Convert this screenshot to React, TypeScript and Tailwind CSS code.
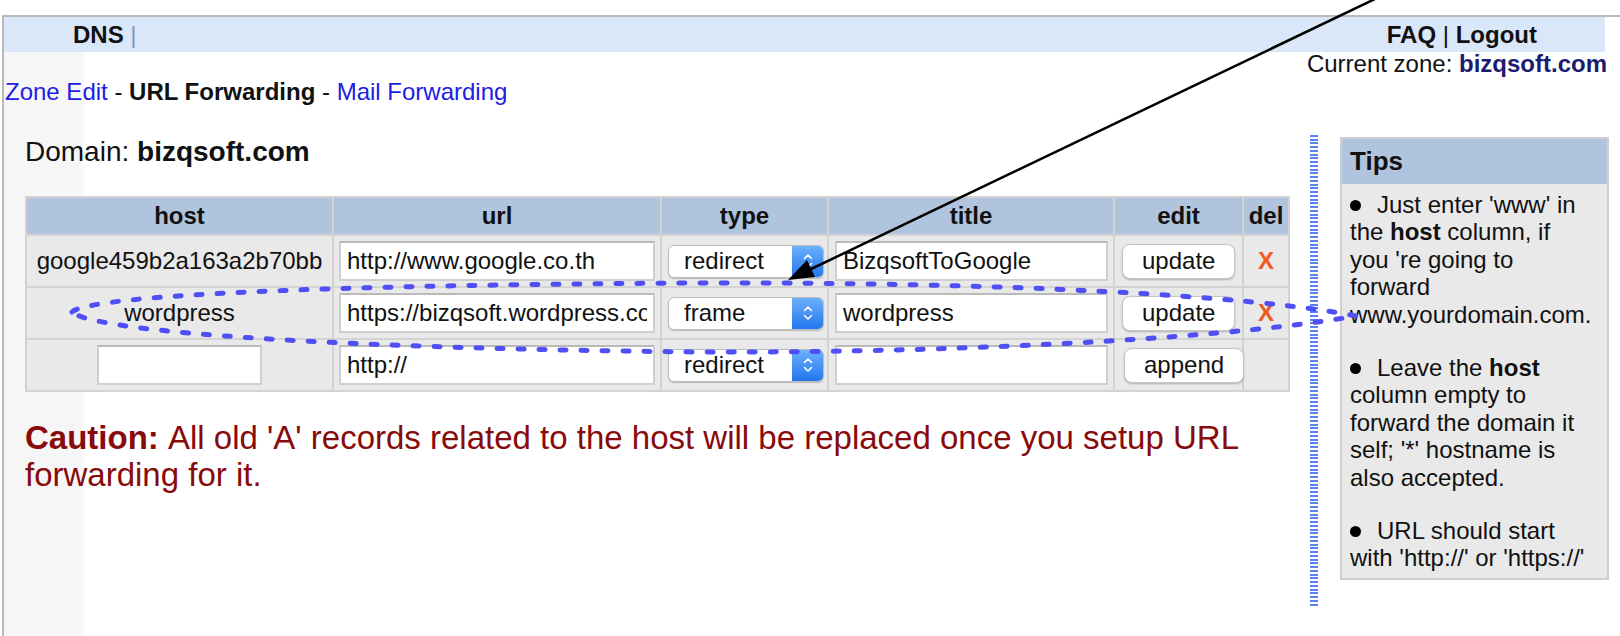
import React from "react";

type Rec = { host: string; url: string; type: string; title: string };

const records: Rec[] = [
  { host: "google459b2a163a2b70bb", url: "http://www.google.co.th", type: "redirect", title: "BizqsoftToGoogle" },
  { host: "wordpress", url: "https://bizqsoft.wordpress.com/", type: "frame", title: "wordpress" },
];

const cell = "border-2 border-[#d3d3d3] bg-[#e9e9e9] px-[5px] align-middle";
const head = "border-2 border-[#d3d3d3] bg-[#b0c4de] font-bold text-center";

function Chevrons() {
  return (
    <svg width="12" height="20" viewBox="0 0 12 20" fill="none" stroke="white" strokeWidth="1.6" strokeLinecap="round" strokeLinejoin="round">
      <path d="M2.5 7.5 L6 4 L9.5 7.5" />
      <path d="M2.5 12.5 L6 16 L9.5 12.5" />
    </svg>
  );
}

function TypeSelect({ value }: { value: string }) {
  return (
    <div className="flex h-[33px] w-[156px] items-stretch rounded-[6px] border border-[#bdbdbd] bg-white shadow-[0_1px_1px_rgba(0,0,0,0.2)]">
      <span className="flex-1 pl-[15px] text-[24px] leading-[30px] text-[#111]">{value}</span>
      <span className="flex w-[31px] items-center justify-center rounded-r-[5px] bg-gradient-to-b from-[#6cb0fa] to-[#1f76ee]">
        <Chevrons />
      </span>
    </div>
  );
}

function Btn({ label }: { label: string }) {
  return (
    <button className="h-[35px] rounded-[8px] border border-[#c6c6c6] bg-white px-[19px] text-[24px] leading-[32px] text-[#111] shadow-[0_1px_2px_rgba(0,0,0,0.25)]">
      {label}
    </button>
  );
}

function TextBox({ value, className = "w-full" }: { value: string; className?: string }) {
  return (
    <input
      readOnly
      value={value}
      className={`${className} block h-[40px] border-2 border-[#cfcfcf] border-t-[#bababa] bg-white px-[6px] text-[24px] text-[#111] outline-none`}
    />
  );
}

function Bullet() {
  return <span className="mr-[16px] inline-block h-[11px] w-[11px] rounded-full bg-black align-[2px]" />;
}

export default function App() {
  return (
    <div className="relative h-[636px] w-[1620px] overflow-hidden bg-white font-['Liberation_Sans',Arial,Helvetica,sans-serif] text-[#111]">
      <div className="ml-[2px] mt-[15px] h-[621px] border-l-2 border-t-2 border-[#b9b9b9] bg-[linear-gradient(to_right,#f6f6f6_0,#f6f6f6_76px,#ffffff_82px)]">
        {/* top menu */}
        <div className="flex h-[35px] w-[1601px] items-center justify-between bg-[#dae7f8] pl-[69px] pr-[68px] text-[24px] leading-[35px]">
          <div>
            <span className="font-bold">DNS</span> <span className="text-[#7d95b6]">|</span>
          </div>
          <div className="font-bold">
            FAQ <span className="font-normal">|</span> Logout
          </div>
        </div>
        <div className="w-[1603px] text-right text-[24px] leading-[24px]">
          Current zone: <span className="font-bold text-[#1b1b72]">bizqsoft.com</span>
        </div>
        <div className="mt-[4px] pl-[1px] text-[24px] leading-[24px]">
          <a className="text-[#2020e2]">Zone Edit</a> - <span className="font-bold">URL Forwarding</span> -{" "}
          <a className="text-[#2020e2]">Mail Forwarding</a>
        </div>

        <div className="mt-[31px] flex items-start">
          <div className="w-[1284px] pl-[21px]">
            <div className="mt-[1px] text-[28px] leading-[32px]">
              Domain: <span className="font-bold">bizqsoft.com</span>
            </div>

            <table className="mt-[28px] w-[1263px] table-fixed border-collapse border-2 border-[#d3d3d3] text-[24px]">
              <colgroup>
                <col className="w-[307px]" />
                <col className="w-[328px]" />
                <col className="w-[167px]" />
                <col className="w-[286px]" />
                <col className="w-[129px]" />
                <col className="w-[46px]" />
              </colgroup>
              <thead>
                <tr className="h-[37px]">
                  <th className={head}>host</th>
                  <th className={head}>url</th>
                  <th className={head}>type</th>
                  <th className={head}>title</th>
                  <th className={head}>edit</th>
                  <th className={head}>del</th>
                </tr>
              </thead>
              <tbody>
                {records.map((r) => (
                  <tr key={r.host} className="h-[52px]">
                    <td className={`${cell} whitespace-nowrap text-center`}>{r.host}</td>
                    <td className={cell}>
                      <TextBox value={r.url} />
                    </td>
                    <td className={`${cell} pl-[6px]`}>
                      <TypeSelect value={r.type} />
                    </td>
                    <td className={`${cell} pl-[6px]`}>
                      <TextBox value={r.title} />
                    </td>
                    <td className={`${cell} pl-[7px]`}>
                      <Btn label="update" />
                    </td>
                    <td className={`${cell} text-center text-[24px] font-bold text-[#f25a22]`}>X</td>
                  </tr>
                ))}
                <tr className="h-[52px]">
                  <td className={cell}>
                    <TextBox value="" className="mx-auto w-[165px]" />
                  </td>
                  <td className={cell}>
                    <TextBox value="http://" />
                  </td>
                  <td className={`${cell} pl-[6px]`}>
                    <TypeSelect value="redirect" />
                  </td>
                  <td className={`${cell} pl-[6px]`}>
                    <TextBox value="" />
                  </td>
                  <td className={`${cell} pl-[9px]`}>
                    <Btn label="append" />
                  </td>
                  <td className={cell}></td>
                </tr>
              </tbody>
            </table>

            <p className="mt-[27px] max-w-[1263px] text-[33px] leading-[37px] text-[#880a0a]">
              <b>Caution: </b>All old 'A' records related to the host will be replaced once you setup URL forwarding for it.
            </p>
          </div>

          {/* dotted separator */}
          <div className="ml-[22px] h-[472px] w-[8px] bg-[repeating-linear-gradient(to_bottom,#5b80f5_0,#5b80f5_2px,transparent_2px,transparent_3.75px)]" />

          <aside className="ml-[22px] mt-[2px] w-[269px] border-2 border-[#cfcfcf] bg-[#e9e9e9]">
            <div className="h-[45px] bg-[#b0c4de] pl-[8px] text-[26px] font-bold leading-[45px]">Tips</div>
            <div className="whitespace-nowrap px-[8px] pb-[6px] pt-[7px] text-[24px] leading-[27.4px]">
              <div>
                <Bullet />
                Just enter 'www' in
              </div>
              <div>
                the <b>host</b> column, if
              </div>
              <div>you 're going to</div>
              <div>forward</div>
              <div>www.yourdomain.com.</div>
              <div className="h-[26px]" />
              <div>
                <Bullet />
                Leave the <b>host</b>
              </div>
              <div>column empty to</div>
              <div>forward the domain it</div>
              <div>self; '*' hostname is</div>
              <div>also accepted.</div>
              <div className="h-[26px]" />
              <div>
                <Bullet />
                URL should start
              </div>
              <div>with 'http://' or 'https://'</div>
            </div>
          </aside>
        </div>
      </div>

      {/* annotation: arrow + dashed loop around the wordpress row */}
      <svg className="pointer-events-none absolute left-0 top-0" width="1620" height="636" viewBox="0 0 1620 636">
        <path
          d="M72 312 C90 296 300 285 700 283 C1000 282 1250 295 1356 316 C1250 335 1000 353 700 352 C300 348 90 330 72 312 Z"
          fill="none"
          stroke="#4f4ff5"
          strokeWidth="5"
          strokeDasharray="6 15"
          strokeLinecap="round"
        />
        <line x1="1377" y1="-2" x2="809" y2="270" stroke="black" strokeWidth="2.5" />
        <polygon points="788,280 815,277 807,260" fill="black" />
      </svg>
    </div>
  );
}
